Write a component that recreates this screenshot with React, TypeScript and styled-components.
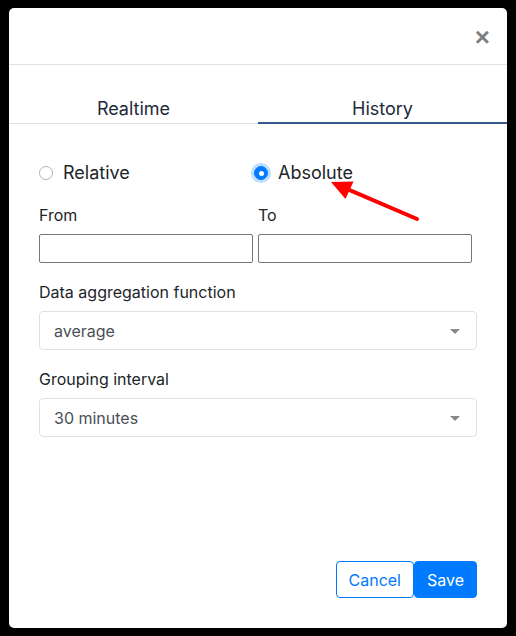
import React, { useState } from 'react';
import styled, { createGlobalStyle } from 'styled-components';

const GlobalStyle = createGlobalStyle`
  html, body {
    margin: 0;
    padding: 0;
    background: #000;
  }
  body {
    font-family: Inter, "Noto Sans", sans-serif;
    color: #212529;
  }
`;

function App() {
  const [tab, setTab] = useState('history');
  const [mode, setMode] = useState('absolute');

  return (
    <>
      <GlobalStyle />
      <Dialog>
        <Header>
          <CloseButton aria-label="Close">×</CloseButton>
        </Header>

        <Tabs>
          <Tab active={tab === 'realtime'} onClick={() => setTab('realtime')}>
            Realtime
          </Tab>
          <Tab active={tab === 'history'} onClick={() => setTab('history')}>
            History
          </Tab>
        </Tabs>

        <Body>
          <RadioRow>
            <RadioOption onClick={() => setMode('relative')}>
              <Radio checked={mode === 'relative'} />
              Relative
            </RadioOption>
            <RadioOption onClick={() => setMode('absolute')}>
              <Radio checked={mode === 'absolute'} />
              Absolute
            </RadioOption>
          </RadioRow>

          <DateRow>
            <Field>
              <Label>From</Label>
              <DateInput type="text" />
            </Field>
            <Field>
              <Label>To</Label>
              <DateInput type="text" />
            </Field>
          </DateRow>

          <Field>
            <Label>Data aggregation function</Label>
            <Select>
              average
              <Caret />
            </Select>
          </Field>

          <Field>
            <Label>Grouping interval</Label>
            <Select>
              30 minutes
              <Caret />
            </Select>
          </Field>

          {/* red annotation arrow pointing at the Absolute option */}
          <Arrow width="100" height="48" viewBox="0 0 100 48">
            <line x1="94" y1="43" x2="25" y2="13.4" stroke="#f00" strokeWidth="4" strokeLinecap="round" />
            <polygon points="8,6 30.5,5.5 22.5,23" fill="#f00" />
          </Arrow>
        </Body>

        <Footer>
          <Button variant="outline">Cancel</Button>
          <Button variant="primary">Save</Button>
        </Footer>
      </Dialog>
    </>
  );
}

const Dialog = styled.div`
  position: relative;
  display: flex;
  flex-direction: column;
  box-sizing: border-box;
  width: 498px;
  height: 620px;
  margin: 8px 9px;
  background: #fff;
  border-radius: 5px;
  overflow: hidden;
`;

const Header = styled.div`
  display: flex;
  justify-content: flex-end;
  align-items: center;
  height: 56px;
  padding: 0 17px;
  border-bottom: 1px solid #dee2e6;
`;

const CloseButton = styled.button`
  border: 0;
  padding: 0;
  background: transparent;
  font-family: "Liberation Sans", Arial, sans-serif;
  font-size: 26px;
  font-weight: 700;
  line-height: 1;
  color: #000;
  opacity: 0.5;
  margin-top: 2px;
  cursor: pointer;
`;

const Tabs = styled.div`
  display: grid;
  grid-template-columns: 1fr 1fr;
  padding-top: 32px;
`;

const Tab = styled.div<{ active: boolean }>`
  text-align: center;
  font-size: 18px;
  line-height: 24px;
  color: #1e2a3c;
  padding-bottom: ${(p) => (p.active ? '1px' : '2px')};
  border-bottom: ${(p) => (p.active ? '2px solid #35598a' : '1px solid #dee2e6')};
  cursor: pointer;
`;

const Body = styled.div`
  position: relative;
  display: flex;
  flex-direction: column;
  gap: 18px;
  padding: 37px 30px 0;
`;

const RadioRow = styled.div`
  display: grid;
  grid-template-columns: 215px 1fr;
  margin-bottom: 1px;
`;

const RadioOption = styled.label`
  display: flex;
  align-items: center;
  gap: 10px;
  font-size: 18px;
  line-height: 24px;
  color: #212529;
  cursor: pointer;
`;

const Radio = styled.span<{ checked: boolean }>`
  position: relative;
  box-sizing: border-box;
  width: 14px;
  height: 14px;
  border-radius: 50%;
  border: 1px solid ${(p) => (p.checked ? '#007bff' : '#adb5bd')};
  background: ${(p) => (p.checked ? '#007bff' : '#fff')};
  box-shadow: ${(p) => (p.checked ? '0 0 0 3px rgba(0, 123, 255, 0.25)' : 'none')};

  &::after {
    content: '';
    display: ${(p) => (p.checked ? 'block' : 'none')};
    position: absolute;
    left: 50%;
    top: 50%;
    width: 5px;
    height: 5px;
    margin: -2.5px 0 0 -2.5px;
    border-radius: 50%;
    background: #fff;
  }
`;

const DateRow = styled.div`
  display: grid;
  grid-template-columns: 1fr 1fr;
`;

const Field = styled.div`
  display: flex;
  flex-direction: column;
  gap: 8px;
`;

const Label = styled.div`
  font-size: 16px;
  line-height: 22px;
  color: #212529;
`;

const DateInput = styled.input`
  box-sizing: border-box;
  width: calc(100% - 5px);
  height: 29px;
  margin: 0;
  padding: 1px 2px;
  border: 1px solid #767676;
  border-radius: 2px;
  font-family: inherit;
  font-size: 15px;
`;

const Select = styled.div`
  position: relative;
  box-sizing: border-box;
  display: flex;
  align-items: center;
  height: 39px;
  padding: 0 14px;
  border: 1px solid #dee2e6;
  border-radius: 4px;
  font-size: 16px;
  color: #495057;
`;

const Caret = styled.span`
  position: absolute;
  right: 16px;
  top: 50%;
  margin-top: -2px;
  width: 0;
  height: 0;
  border-left: 5px solid transparent;
  border-right: 5px solid transparent;
  border-top: 5px solid #888;
`;

const Arrow = styled.svg`
  position: absolute;
  left: 314px;
  top: 52px;
  pointer-events: none;
`;

const Footer = styled.div`
  display: flex;
  justify-content: flex-end;
  margin-top: auto;
  padding: 0 30px 30px;
`;

const Button = styled.button<{ variant: 'outline' | 'primary' }>`
  box-sizing: border-box;
  height: 37px;
  padding: 0 12px;
  border: 1px solid #007bff;
  border-radius: 4px;
  font-family: inherit;
  font-size: 16px;
  background: ${(p) => (p.variant === 'primary' ? '#007bff' : '#fff')};
  color: ${(p) => (p.variant === 'primary' ? '#fff' : '#007bff')};
  cursor: pointer;
`;

export default App;
